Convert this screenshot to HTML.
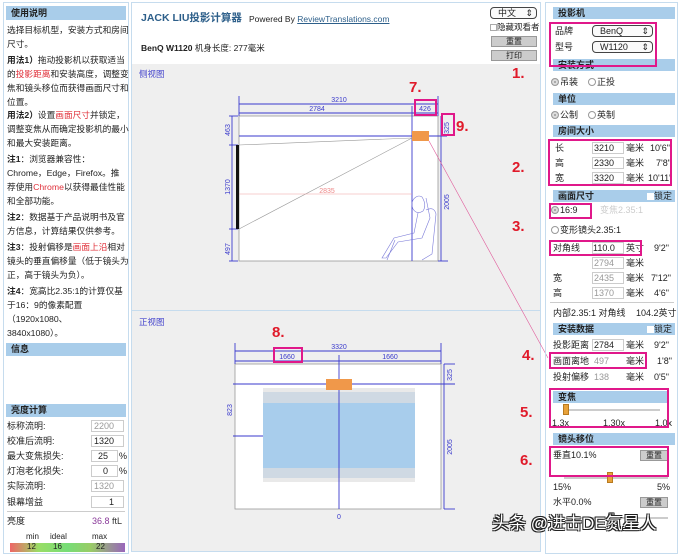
<!DOCTYPE html>
<html><head><meta charset="utf-8"><style>
*{margin:0;padding:0;box-sizing:border-box}
body{width:680px;height:552px;overflow:hidden;background:#fff;font-family:"Liberation Sans","Noto Sans CJK SC",sans-serif;font-size:9px;color:#222;position:relative}
.a{position:absolute;white-space:nowrap;line-height:12px}
.hd{position:absolute;background:#a9cdea;font-weight:bold;font-size:9px;line-height:12px;padding-left:5px;color:#222}
.r{color:#e0303a}
.in{position:absolute;background:#fff;border:1px solid #ccc;height:12px;font-size:9px;line-height:10px;text-align:right;padding-right:9px}
.g{color:#999}
.sel{position:absolute;border:1px solid #444;border-radius:4px;height:12px;font-size:9px;line-height:10px;padding-left:7px;background:#fafafa}
.btn{position:absolute;background:#ccc;border:1px solid #999;height:11px;font-size:8px;line-height:9px;text-align:center}
.mb{position:absolute;border:2px solid #e0188a}
.num{position:absolute;color:#e01a2a;font-size:15px;font-weight:bold;line-height:16px}
.rad{display:inline-block;width:8px;height:8px;border:1px solid #999;border-radius:50%;vertical-align:-1px;margin-right:1px;background:#fff}
.rad.on{background:#999;box-shadow:inset 0 0 0 2px #ddd}
</style></head><body>

<!-- left panel -->
<div style="position:absolute;left:3px;top:2px;width:126px;height:552px;border:1px solid #c6dcee"></div>
<div class="hd" style="left:6px;top:6px;width:120px;height:14px;line-height:14px">使用说明</div>
<div style="position:absolute;left:7px;top:23px;font-size:8.7px;line-height:14px;width:122px">
<div>选择目标机型，安装方式和房间</div><div>尺寸。</div>
<div style="margin-top:2px"><b>用法1）</b>拖动投影机以获取适当</div><div>的<span class="r">投影距离</span>和安装高度，调整变</div><div>焦和镜头移位而获得画面尺寸和</div><div>位置。</div>
<div style="margin-top:-1px"><b>用法2）</b>设置<span class="r">画面尺寸</span>并锁定，</div><div>调整变焦从而确定投影机的最小</div><div>和最大安装距离。</div>
<div style="margin-top:2px"><b>注1</b>：浏览器兼容性：</div><div>Chrome，Edge，Firefox。推</div><div>荐使用<span class="r">Chrome</span>以获得最佳性能</div><div>和全部功能。</div>
<div style="margin-top:2px"><b>注2</b>：数据基于产品说明书及官</div><div>方信息，计算结果仅供参考。</div>
<div style="margin-top:2px"><b>注3</b>：投射偏移是<span class="r">画面上沿</span>相对</div><div>镜头的垂直偏移量（低于镜头为</div><div>正，高于镜头为负）。</div>
<div style="margin-top:2px"><b>注4</b>：宽高比2.35:1的计算仅基</div><div>于16：9的像素配置</div><div>（1920x1080、</div><div>3840x1080）。</div>
</div>
<div class="hd" style="left:6px;top:343px;width:120px;height:13px">信息</div>
<div class="hd" style="left:6px;top:404px;width:120px;height:13px">亮度计算</div>
<div class="a" style="left:7px;top:420px">标称流明:</div><div class="in g" style="left:91px;top:420px;width:33px">2200</div>
<div class="a" style="left:7px;top:435px">校准后流明:</div><div class="in" style="left:91px;top:435px;width:33px">1320</div>
<div class="a" style="left:7px;top:450px">最大变焦损失:</div><div class="in" style="left:91px;top:450px;width:27px">25</div><div class="a" style="left:119px;top:450px">%</div>
<div class="a" style="left:7px;top:465px">灯泡老化损失:</div><div class="in" style="left:91px;top:465px;width:27px">0</div><div class="a" style="left:119px;top:465px">%</div>
<div class="a" style="left:7px;top:480px">实际流明:</div><div class="in g" style="left:91px;top:480px;width:33px">1320</div>
<div class="a" style="left:7px;top:496px">银幕增益</div><div class="in" style="left:91px;top:496px;width:33px">1</div>
<div style="position:absolute;left:7px;top:511px;width:118px;border-top:1px solid #ccc"></div>
<div class="a" style="left:7px;top:515px">亮度</div><div class="a" style="left:92px;top:515px;color:#8a3a9a">36.8 <span style="color:#333">ftL</span></div>
<div class="a" style="left:26px;top:531px;font-size:8px">min</div><div class="a" style="left:50px;top:531px;font-size:8px">ideal</div><div class="a" style="left:92px;top:531px;font-size:8px">max</div>
<div style="position:absolute;left:10px;top:543px;width:115px;height:9px;background:linear-gradient(90deg,#e66 0%,#9d6 25%,#7d7 50%,#9c6 70%,#96b 100%)"></div>
<div class="a" style="left:27px;top:541px;font-size:8px">12</div><div class="a" style="left:53px;top:541px;font-size:8px">16</div><div class="a" style="left:96px;top:541px;font-size:8px">22</div>

<!-- middle -->
<div style="position:absolute;left:131px;top:2px;width:410px;height:550px;border:1px solid #c6dcee;background:#efefef"></div>
<div style="position:absolute;left:132px;top:3px;width:408px;height:61px;background:#fff"></div>
<div class="a" style="left:141px;top:12px;font-size:10.5px;font-weight:bold;color:#2d5f8a">JACK LIU投影计算器</div>
<div class="a" style="left:249px;top:13px;font-size:8.5px">Powered By <span style="color:#2d5f8a;text-decoration:underline">ReviewTranslations.com</span></div>
<div class="a" style="left:141px;top:42px;font-size:8.5px"><b>BenQ W1120</b> 机身长度: 277毫米</div>
<div class="sel" style="left:490px;top:7px;width:47px">中文<span style="position:absolute;right:3px">⇕</span></div>
<div class="a" style="left:490px;top:21px;font-size:8.5px"><span style="display:inline-block;width:7px;height:7px;border:1px solid #aaa;vertical-align:-1px"></span>隐藏观看者</div>
<div class="btn" style="left:491px;top:36px;width:46px">重置</div>
<div class="btn" style="left:491px;top:50px;width:46px">打印</div>
<div class="a" style="left:139px;top:68px;color:#4444cc;font-size:8.5px">侧视图</div>
<div style="position:absolute;left:132px;top:310px;width:408px;border-top:1px solid #c6dcee"></div>
<div class="a" style="left:139px;top:316px;color:#4444cc;font-size:8.5px">正视图</div>

<svg style="position:absolute;left:0;top:0" width="680" height="552" font-family="Liberation Sans" font-size="7">
<rect x="239" y="116" width="199" height="145" fill="#fff" stroke="#999" stroke-width="0.8"/>
<g stroke="#3a3acc" stroke-width="0.9" fill="none">
<line x1="239" y1="104" x2="438" y2="104"/><line x1="239" y1="113" x2="438" y2="113"/>
<line x1="239" y1="96" x2="239" y2="116"/><line x1="438" y1="96" x2="438" y2="116"/><line x1="412" y1="106" x2="412" y2="261"/>
<line x1="239" y1="136" x2="447" y2="136"/>
<line x1="232" y1="116" x2="232" y2="261"/>
<line x1="229" y1="116" x2="238" y2="116"/><line x1="229" y1="145" x2="238" y2="145"/><line x1="229" y1="229" x2="238" y2="229"/><line x1="229" y1="261" x2="238" y2="261"/>
<line x1="441" y1="116" x2="441" y2="261"/><line x1="438" y1="261" x2="448" y2="261"/>
</g>
<g fill="#3a3acc" text-anchor="middle">
<text x="339" y="102">3210</text><text x="317" y="111">2784</text><text x="425" y="111">426</text>
<text transform="translate(230,130) rotate(-90)">463</text>
<text transform="translate(230,187) rotate(-90)">1370</text>
<text transform="translate(230,249) rotate(-90)">497</text>
<text transform="translate(449,128) rotate(-90)">325</text>
<text transform="translate(449,202) rotate(-90)">2005</text>
</g>
<line x1="412" y1="138" x2="239" y2="145" stroke="#999" stroke-width="0.6"/>
<line x1="412" y1="138" x2="239" y2="229" stroke="#999" stroke-width="0.6"/>
<line x1="239" y1="194" x2="412" y2="194" stroke="#f0a0a0" stroke-width="0.6"/>
<text x="327" y="193" fill="#e88" font-size="7" text-anchor="middle">2835</text>
<rect x="236" y="145" width="3" height="84" fill="#111"/>
<rect x="412" y="131" width="17" height="10" fill="#f0984a"/>
<g stroke="#7a7ad8" stroke-width="0.6" fill="none">
<path d="M416 197 q-6 4 -3 12 q4 6 10 2 q4 -6 -1 -14 q-3 -2 -6 0z"/>
<path d="M418 213 l-4 20 l-20 5 l-12 20 l4 0 l12 -16 l24 -4 l8 -20 l-4 -20"/>
<path d="M426 210 q8 -4 10 4 l-4 40 l-10 6"/>
<path d="M395 240 l-8 20"/>
</g>
<line x1="429" y1="141" x2="548" y2="358" stroke="#e05a9a" stroke-width="0.6"/>
<rect x="235" y="364" width="206" height="145" fill="#fff" stroke="#999" stroke-width="0.8"/>
<rect x="263" y="388" width="152" height="94" fill="#e9e9e9"/>
<rect x="263" y="392" width="152" height="86" fill="#cfd9e3"/>
<rect x="263" y="403" width="152" height="65" fill="#a8cdec"/>
<g stroke="#3a3acc" stroke-width="0.9" fill="none">
<line x1="235" y1="351" x2="441" y2="351"/><line x1="235" y1="361" x2="441" y2="361"/>
<line x1="235" y1="343" x2="235" y2="364"/><line x1="441" y1="343" x2="441" y2="364"/>
<line x1="339" y1="355" x2="339" y2="509"/>
<line x1="233" y1="384" x2="455" y2="384"/>
<line x1="233" y1="436" x2="263" y2="436"/>
<line x1="444" y1="364" x2="444" y2="509"/><line x1="444" y1="364" x2="455" y2="364"/><line x1="444" y1="509" x2="455" y2="509"/>
</g>
<rect x="326" y="379" width="26" height="11" fill="#f0984a"/>
<g fill="#3a3acc" text-anchor="middle">
<text x="339" y="349">3320</text><text x="287" y="359">1660</text><text x="390" y="359">1660</text>
<text transform="translate(232,410) rotate(-90)">823</text>
<text transform="translate(452,375) rotate(-90)">325</text>
<text transform="translate(452,447) rotate(-90)">2005</text>
<text x="339" y="519">0</text>
</g>
<line x1="566" y1="410" x2="660" y2="410" stroke="#ccc" stroke-width="2"/>
<line x1="564" y1="478" x2="668" y2="478" stroke="#ccc" stroke-width="2"/>
<line x1="564" y1="518" x2="668" y2="518" stroke="#ccc" stroke-width="2"/>
</svg>

<!-- right panel -->
<div style="position:absolute;left:545px;top:2px;width:133px;height:552px;border:1px solid #c6dcee"></div>
<div class="hd" style="left:553px;top:7px;width:122px">投影机</div>
<div class="a" style="left:555px;top:25px">品牌</div><div class="sel" style="left:592px;top:25px;width:61px">BenQ<span style="position:absolute;right:3px">⇕</span></div>
<div class="a" style="left:555px;top:41px">型号</div><div class="sel" style="left:592px;top:41px;width:61px">W1120<span style="position:absolute;right:3px">⇕</span></div>
<div class="hd" style="left:553px;top:59px;width:122px">安装方式</div>
<div class="a" style="left:551px;top:76px"><span class="rad on"></span>吊装 &nbsp; &nbsp;<span class="rad"></span>正投</div>
<div class="hd" style="left:553px;top:93px;width:122px">单位</div>
<div class="a" style="left:551px;top:109px"><span class="rad on"></span>公制 &nbsp; &nbsp;<span class="rad"></span>英制</div>
<div class="hd" style="left:553px;top:125px;width:122px">房间大小</div>
<div class="a" style="left:555px;top:142px">长</div><div class="in" style="left:592px;top:142px;width:32px">3210</div><div class="a" style="left:626px;top:142px">毫米</div><div class="a" style="left:650px;top:142px">10'6"</div>
<div class="a" style="left:555px;top:157px">高</div><div class="in" style="left:592px;top:157px;width:32px">2330</div><div class="a" style="left:626px;top:157px">毫米</div><div class="a" style="left:656px;top:157px">7'8"</div>
<div class="a" style="left:555px;top:172px">宽</div><div class="in" style="left:592px;top:172px;width:32px">3320</div><div class="a" style="left:626px;top:172px">毫米</div><div class="a" style="left:648px;top:172px">10'11"</div>
<div class="hd" style="left:553px;top:190px;width:122px">画面尺寸<span style="position:absolute;right:3px;font-weight:normal"><span style="display:inline-block;width:7px;height:7px;background:#fff;vertical-align:-1px"></span>锁定</span></div>
<div class="a" style="left:551px;top:204px"><span class="rad on"></span>16:9 &nbsp; &nbsp; &nbsp; &nbsp; <span style="color:#ccc">变焦2.35:1</span></div>
<div class="a" style="left:551px;top:224px"><span class="rad"></span>变形镜头2.35:1</div>
<div class="a" style="left:553px;top:242px">对角线</div><div class="in" style="left:592px;top:242px;width:32px">110.0</div><div class="a" style="left:626px;top:242px">英寸</div><div class="a" style="left:654px;top:242px">9'2"</div>
<div class="in g" style="left:592px;top:257px;width:32px">2794</div><div class="a" style="left:626px;top:257px">毫米</div>
<div class="a" style="left:553px;top:272px">宽</div><div class="in g" style="left:592px;top:272px;width:32px">2435</div><div class="a" style="left:626px;top:272px">毫米</div><div class="a" style="left:651px;top:272px">7'12"</div>
<div class="a" style="left:553px;top:287px">高</div><div class="in g" style="left:592px;top:287px;width:32px">1370</div><div class="a" style="left:626px;top:287px">毫米</div><div class="a" style="left:654px;top:287px">4'6"</div>
<div style="position:absolute;left:550px;top:302px;width:124px;border-top:1px solid #ccc"></div>
<div class="a" style="left:553px;top:307px">内部2.35:1 对角线</div><div class="a" style="left:636px;top:307px">104.2英寸</div>
<div class="hd" style="left:553px;top:323px;width:122px">安装数据<span style="position:absolute;right:3px;font-weight:normal"><span style="display:inline-block;width:7px;height:7px;background:#fff;vertical-align:-1px"></span>锁定</span></div>
<div class="a" style="left:553px;top:339px">投影距离</div><div class="in" style="left:592px;top:339px;width:32px">2784</div><div class="a" style="left:626px;top:339px">毫米</div><div class="a" style="left:654px;top:339px">9'2"</div>
<div class="a" style="left:553px;top:355px">画面离地</div><div class="a g" style="left:594px;top:355px">497</div><div class="a" style="left:626px;top:355px">毫米</div><div class="a" style="left:657px;top:355px">1'8"</div>
<div class="a" style="left:553px;top:371px">投射偏移</div><div class="a g" style="left:594px;top:371px">138</div><div class="a" style="left:626px;top:371px">毫米</div><div class="a" style="left:654px;top:371px">0'5"</div>
<div class="hd" style="left:553px;top:391px;width:115px">变焦</div>
<div style="position:absolute;left:563px;top:404px;width:6px;height:11px;background:#e8a23a;border:1px solid #b87a20"></div>
<div class="a" style="left:552px;top:417px">1.3x</div><div class="a" style="left:603px;top:417px">1.30x</div><div class="a" style="left:655px;top:417px">1.0x</div>
<div class="hd" style="left:553px;top:433px;width:122px">镜头移位</div>
<div class="a" style="left:553px;top:449px">垂直10.1%</div><div class="btn" style="left:640px;top:450px;width:28px">重置</div>
<div style="position:absolute;left:607px;top:472px;width:6px;height:11px;background:#e8a23a;border:1px solid #b87a20"></div>
<div class="a" style="left:553px;top:481px">15%</div><div class="a" style="left:657px;top:481px">5%</div>
<div class="a" style="left:553px;top:496px">水平0.0%</div><div class="btn" style="left:640px;top:497px;width:28px">重置</div>
<div style="position:absolute;left:608px;top:512px;width:7px;height:10px;background:#777;border-radius:2px"></div>

<div class="mb" style="left:549px;top:22px;width:108px;height:45px"></div>
<div class="mb" style="left:548px;top:139px;width:124px;height:47px"></div>
<div class="mb" style="left:549px;top:203px;width:43px;height:16px"></div>
<div class="mb" style="left:549px;top:240px;width:93px;height:16px"></div>
<div class="mb" style="left:549px;top:352px;width:98px;height:17px"></div>
<div class="mb" style="left:549px;top:388px;width:120px;height:40px"></div>
<div class="mb" style="left:549px;top:446px;width:120px;height:31px"></div>
<div class="mb" style="left:414px;top:99px;width:23px;height:17px"></div>
<div class="mb" style="left:441px;top:113px;width:14px;height:23px"></div>
<div class="mb" style="left:273px;top:347px;width:30px;height:16px"></div>
<div class="num" style="left:512px;top:66px">1.</div>
<div class="num" style="left:512px;top:160px">2.</div>
<div class="num" style="left:512px;top:219px">3.</div>
<div class="num" style="left:522px;top:348px">4.</div>
<div class="num" style="left:520px;top:405px">5.</div>
<div class="num" style="left:520px;top:453px">6.</div>
<div class="num" style="left:409px;top:80px">7.</div>
<div class="num" style="left:272px;top:325px">8.</div>
<div class="num" style="left:456px;top:119px">9.</div>
<div class="a" style="left:492px;top:514px;font-size:17px;line-height:20px;color:#fff;text-shadow:-1px -1px 0 #222,1px -1px 0 #222,-1px 1px 0 #222,1px 1px 0 #222">头条 @进击DE氮星人</div>
</body></html>
